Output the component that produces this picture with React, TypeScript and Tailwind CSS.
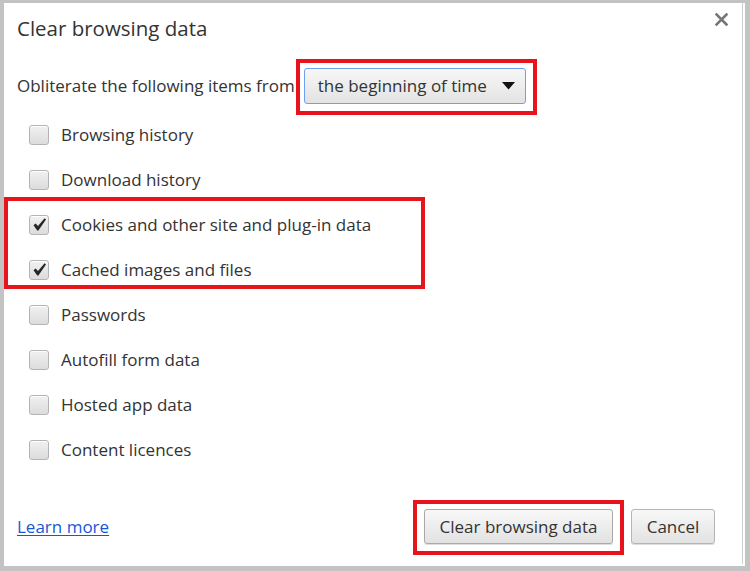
import React from "react";

const font = { fontFamily: '"Open Sans", "Noto Sans", sans-serif' };

function Check({ checked }: { checked?: boolean }) {
  return (
    <span className="relative flex h-[20px] w-[20px] shrink-0 items-center justify-center rounded-[3px] border border-[#b4b4b4] bg-gradient-to-b from-[#f1f1f1] to-[#dcdcdc] shadow-[inset_0_1px_0_#fff]">
      {checked && (
        <svg width="15" height="15" viewBox="0 0 15 15">
          <path d="M1.5 8.2 L3.6 6.4 L6 9 L12.6 1.2 L14 2.6 L6.4 13.4 L5.2 13.4 Z" fill="#262626" />
        </svg>
      )}
    </span>
  );
}

function Row({ label, checked }: { label: string; checked?: boolean }) {
  return (
    <div className="flex h-[45px] items-center pl-[25px]">
      <Check checked={checked} />
      <span className="ml-[12px] text-[17px] text-[#333]">{label}</span>
    </div>
  );
}

export default function App() {
  return (
    <div className="h-[571px] w-[750px] bg-[#c3c3c3] pb-[5px] pl-[4px] pr-[5px] pt-[3px]" style={font}>
      <div className="flex h-full bg-white pr-[2px]">
        <div className="flex h-[561px] flex-1 flex-col border-r border-[#cdcdcd]">
          <div className="flex h-[50px] justify-between pl-[13px] pr-[14px]">
            <span className="self-center text-[20.5px] text-[#333]">Clear browsing data</span>
            <svg className="mt-[10px]" width="13" height="13" viewBox="0 0 13 13">
              <path d="M1.5 1.5 L11.5 11.5 M11.5 1.5 L1.5 11.5" stroke="#767676" strokeWidth="2.6" strokeLinecap="square" />
            </svg>
          </div>
          <div className="mt-[15px] flex h-[36px] items-center pl-[13px]">
            <span className="text-[17px] text-[#333]">Obliterate the following items from</span>
            <div className="relative ml-[9px]">
              <button className="flex h-[36px] w-[222px] items-center justify-between rounded-[3px] border border-[#6f9ff0] bg-gradient-to-b from-[#f7f7f7] to-[#e3e3e3] pl-[13px] pr-[10px] text-[17px] text-[#333]">
                <span>the beginning of time</span>
                <svg width="13" height="8" viewBox="0 0 13 8">
                  <path d="M0 0 H13 L6.5 7.5 Z" fill="#111" />
                </svg>
              </button>
              <div className="absolute -bottom-[11px] -left-[8px] -right-[11px] -top-[9px] border-4 border-[#e8141c]" />
            </div>
          </div>
          <div className="mt-[8px] flex flex-col">
            <Row label="Browsing history" />
            <Row label="Download history" />
            <div className="relative">
              <Row label="Cookies and other site and plug-in data" checked />
              <Row label="Cached images and files" checked />
              <div className="absolute -top-[5px] bottom-[3px] left-0 w-[421px] border-4 border-[#e8141c]" />
            </div>
            <Row label="Passwords" />
            <Row label="Autofill form data" />
            <Row label="Hosted app data" />
            <Row label="Content licences" />
          </div>
          <div className="mt-[37px] flex h-[35px] items-center justify-between pl-[13px] pr-[27px]">
            <a className="text-[17px] text-[#1558d6] underline underline-offset-[2px]" href="#">Learn more</a>
            <div className="flex gap-[18px]">
              <div className="relative">
                <button className="h-[35px] w-[189px] rounded-[3px] border border-[#a9a9a9] bg-gradient-to-b from-[#f8f8f8] to-[#e2e2e2] text-[17px] text-[#333] shadow-[0_1px_0_#ddd]">Clear browsing data</button>
                <div className="absolute -bottom-[11px] -left-[11px] -right-[11px] -top-[9px] border-4 border-[#e8141c]" />
              </div>
              <button className="h-[35px] w-[84px] rounded-[3px] border border-[#b5b5b5] bg-gradient-to-b from-[#f8f8f8] to-[#e2e2e2] text-[17px] text-[#333] shadow-[0_1px_0_#ddd]">Cancel</button>
            </div>
          </div>
        </div>
      </div>
    </div>
  );
}
